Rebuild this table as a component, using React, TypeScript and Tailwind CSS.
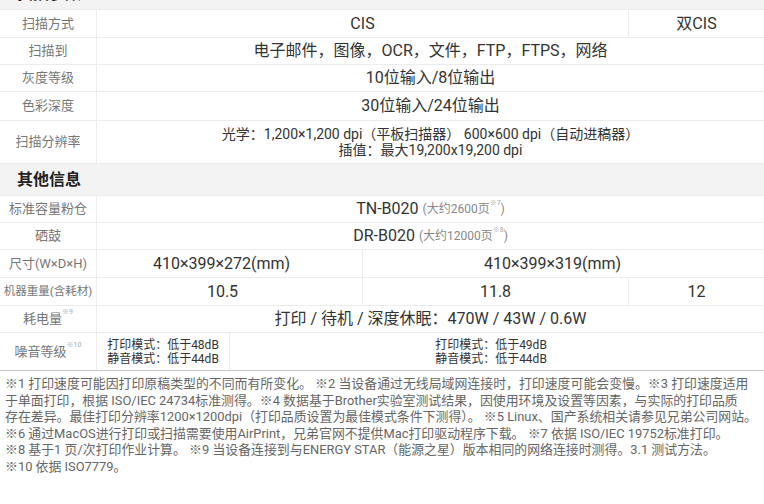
import React from "react";

const FONT = { fontFamily: 'Roboto, "Noto Sans CJK SC", sans-serif' };

function Header({ title }: { title: string }) {
  return (
    <div className="h-[32px] bg-[#f3f3f3] flex items-center pl-[17px] text-[16px] font-bold text-[#222] border-b border-[#ececec]">
      {title}
    </div>
  );
}

function Label({ children, small }: { children: React.ReactNode; small?: boolean }) {
  return (
    <div
      className={`w-[97px] shrink-0 border-r border-[#ececec] flex items-center justify-center text-[#777] whitespace-nowrap ${
        small ? "text-[11.5px]" : "text-[13px]"
      }`}
    >
      {children}
    </div>
  );
}

function Row({
  h,
  label,
  small,
  children,
  last,
}: {
  h: string;
  label: React.ReactNode;
  small?: boolean;
  children: React.ReactNode;
  last?: boolean;
}) {
  return (
    <div className={`flex ${h} border-b ${last ? "border-[#c9c9c9]" : "border-[#ececec]"}`}>
      <Label small={small}>{label}</Label>
      {children}
    </div>
  );
}

function Cell({
  className = "",
  size = "text-[16px]",
  children,
}: {
  className?: string;
  size?: string;
  children: React.ReactNode;
}) {
  return (
    <div className={`flex items-center justify-center text-[#333] whitespace-nowrap ${size} ${className}`}>
      {children}
    </div>
  );
}

function Sup({ children }: { children: React.ReactNode }) {
  return <sup className="text-[7px] text-[#aaa] align-super">{children}</sup>;
}

export default function App() {
  return (
    <div className="w-[764px] h-[504px] overflow-hidden bg-white" style={FONT}>
      <div className="-mt-[22px]">
        <Header title="扫描参数" />
        <Row h="h-[28px]" label="扫描方式">
          <Cell className="w-[532px] border-r border-[#ececec]">CIS</Cell>
          <Cell className="flex-1">双CIS</Cell>
        </Row>
        <Row h="h-[27px]" label="扫描到">
          <Cell className="flex-1">电子邮件，图像，OCR，文件，FTP，FTPS，网络</Cell>
        </Row>
        <Row h="h-[27px]" label="灰度等级">
          <Cell className="flex-1">10位输入/8位输出</Cell>
        </Row>
        <Row h="h-[29px]" label="色彩深度">
          <Cell className="flex-1">30位输入/24位输出</Cell>
        </Row>
        <Row h="h-[43px]" label="扫描分辨率">
          <Cell className="flex-1 flex-col leading-[16px]" size="text-[14px]">
            <div>光学：1,200×1,200 dpi（平板扫描器） 600×600 dpi（自动进稿器）</div>
            <div>插值：最大19,200x19,200 dpi</div>
          </Cell>
        </Row>
        <Header title="其他信息" />
        <Row h="h-[27px]" label="标准容量粉仓">
          <Cell className="flex-1">
            TN-B020
            <span className="ml-[4px] text-[12px] text-[#888]">
              (大约2600页<Sup>※7</Sup>)
            </span>
          </Cell>
        </Row>
        <Row h="h-[27px]" label="硒鼓">
          <Cell className="flex-1">
            DR-B020
            <span className="ml-[4px] text-[12px] text-[#888]">
              (大约12000页<Sup>※8</Sup>)
            </span>
          </Cell>
        </Row>
        <Row h="h-[28px]" label="尺寸(W×D×H)">
          <Cell className="w-[266px] border-r border-[#ececec] pr-[16px]">410×399×272(mm)</Cell>
          <Cell className="flex-1 pr-[22px]">410×399×319(mm)</Cell>
        </Row>
        <Row h="h-[28px]" label="机器重量(含耗材)" small>
          <Cell className="w-[266px] border-r border-[#ececec] pr-[14px]">10.5</Cell>
          <Cell className="w-[266px] border-r border-[#ececec]">11.8</Cell>
          <Cell className="flex-1">12</Cell>
        </Row>
        <Row
          h="h-[27px]"
          label={
            <span>
              耗电量<Sup>※9</Sup>
            </span>
          }
        >
          <Cell className="flex-1">打印 / 待机 / 深度休眠：470W / 43W / 0.6W</Cell>
        </Row>
        <Row
          h="h-[38px]"
          last
          label={
            <span>
              噪音等级<Sup>※10</Sup>
            </span>
          }
        >
          <Cell className="w-[133px] border-r border-[#ececec] leading-[14px]" size="text-[12px]">
            <div className="text-left">
              <div>打印模式：低于48dB</div>
              <div>静音模式：低于44dB</div>
            </div>
          </Cell>
          <Cell className="flex-1 leading-[14px] pr-[12px]" size="text-[12px]">
            <div className="text-left">
              <div>打印模式：低于49dB</div>
              <div>静音模式：低于44dB</div>
            </div>
          </Cell>
        </Row>
      </div>
      <div className="pt-[5px] pl-[5px] text-[12.9px] leading-[16.5px] text-[#666] whitespace-nowrap">
        <div>※1 打印速度可能因打印原稿类型的不同而有所变化。 ※2 当设备通过无线局域网连接时，打印速度可能会变慢。※3 打印速度适用</div>
        <div>于单面打印，根据 ISO/IEC 24734标准测得。※4 数据基于Brother实验室测试结果，因使用环境及设置等因素，与实际的打印品质</div>
        <div>存在差异。最佳打印分辨率1200×1200dpi（打印品质设置为最佳模式条件下测得）。 ※5 Linux、国产系统相关请参见兄弟公司网站。</div>
        <div>※6 通过MacOS进行打印或扫描需要使用AirPrint，兄弟官网不提供Mac打印驱动程序下载。 ※7 依据 ISO/IEC 19752标准打印。</div>
        <div>※8 基于1 页/次打印作业计算。 ※9 当设备连接到与ENERGY STAR（能源之星）版本相同的网络连接时测得。3.1 测试方法。</div>
        <div>※10 依据 ISO7779。</div>
      </div>
    </div>
  );
}
